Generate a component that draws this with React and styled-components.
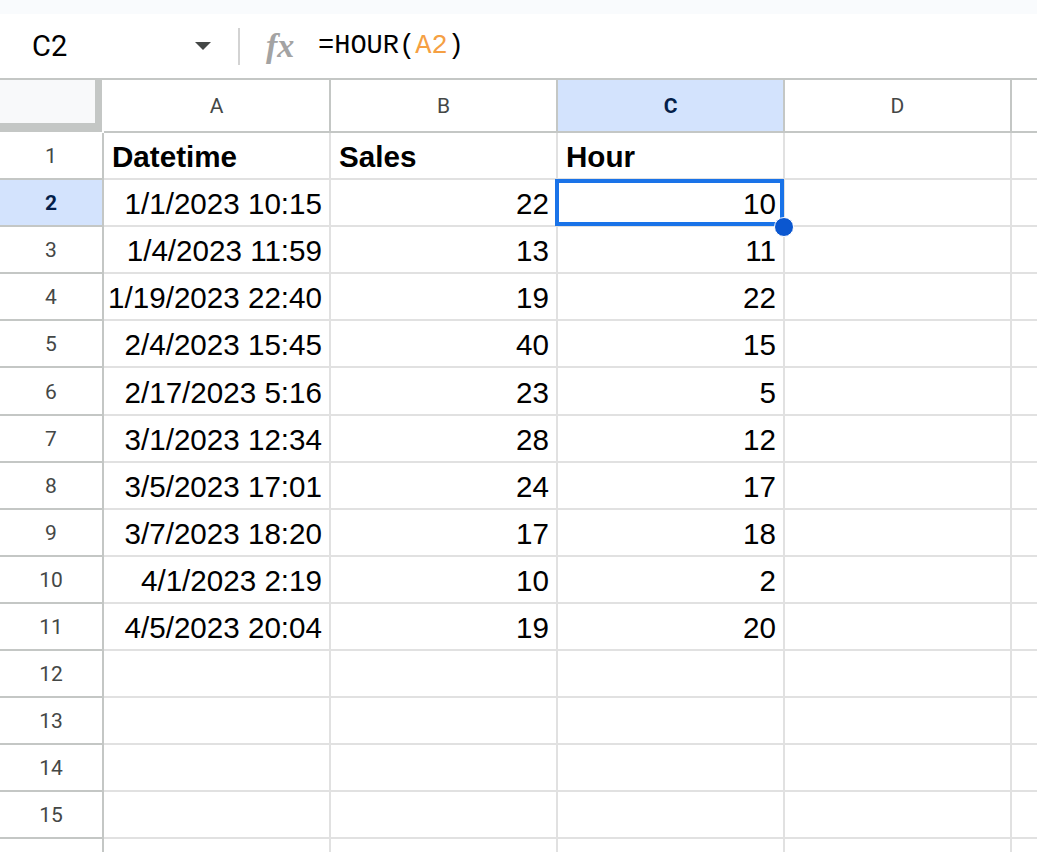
import React from "react";
import styled, { createGlobalStyle, css } from "styled-components";

const GlobalStyle = createGlobalStyle`
  html, body {
    margin: 0;
    padding: 0;
    background: #ffffff;
    overflow: hidden;
  }
  body {
    font-family: "Liberation Sans", Arial, sans-serif;
  }
`;

const Page = styled.div`
  width: 1037px;
  height: 852px;
  overflow: hidden;
  display: flex;
  flex-direction: column;
  background: #ffffff;
`;

const TopStrip = styled.div`
  height: 14px;
  flex-shrink: 0;
  background: #f9fbfd;
`;

const FormulaBar = styled.div`
  height: 64px;
  flex-shrink: 0;
  display: flex;
  align-items: center;
  background: #ffffff;
`;

const NameBox = styled.div`
  width: 225px;
  box-sizing: border-box;
  padding: 0 14px 0 32px;
  display: flex;
  align-items: center;
  justify-content: space-between;
`;

const NameText = styled.span`
  font-family: Roboto, "Liberation Sans", sans-serif;
  font-size: 29px;
  color: #000000;
`;

const DropArrow = styled.span`
  width: 0;
  height: 0;
  border-left: 8px solid transparent;
  border-right: 8px solid transparent;
  border-top: 8px solid #444746;
`;

const Divider = styled.div`
  width: 2px;
  height: 37px;
  margin-left: 13px;
  background: #d3d3d3;
`;

const FxIcon = styled.span`
  margin-left: 26px;
  width: 34px;
  font-family: "Liberation Serif", "DejaVu Serif", serif;
  font-style: italic;
  font-weight: bold;
  font-size: 34px;
  color: #a3a3a3;
  line-height: 1;
  letter-spacing: 0px;
`;

const FormulaText = styled.div`
  margin-left: 18px;
  font-family: "Liberation Mono", "DejaVu Sans Mono", monospace;
  font-size: 27px;
  color: #000000;
  white-space: pre;
`;

const Ref = styled.span`
  color: #f5a043;
`;

const Sheet = styled.div`
  display: flex;
  flex-direction: column;
  flex-shrink: 0;
`;

const HeaderRow = styled.div`
  display: flex;
  border-top: 2px solid #c4c7c5;
  height: 53px;
  flex-shrink: 0;
`;

const Corner = styled.div`
  width: 102px;
  height: 52px;
  margin-right: 2px;
  box-sizing: border-box;
  flex-shrink: 0;
  background: #f8f9fa;
  border-right: 7px solid #c4c7c5;
  border-bottom: 9px solid #c4c7c5;
`;

const selectedHeader = css`
  background: #d3e3fd;
  color: #041e49;
  font-weight: bold;
`;

const ColHeader = styled.div`
  width: 227px;
  flex-shrink: 0;
  box-sizing: border-box;
  border-right: 2px solid #c4c7c5;
  border-bottom: 2px solid #c4c7c5;
  display: flex;
  align-items: center;
  justify-content: center;
  font-family: Roboto, "Liberation Sans", sans-serif;
  font-size: 21px;
  color: #444746;
  background: #ffffff;
  ${(p) => p.$selected && selectedHeader}
`;

const Row = styled.div`
  display: flex;
  height: 47.1px;
  flex-shrink: 0;
`;

const RowHeader = styled.div`
  width: 104px;
  flex-shrink: 0;
  box-sizing: border-box;
  border-right: 2px solid #c4c7c5;
  border-bottom: 2px solid #c4c7c5;
  display: flex;
  align-items: center;
  justify-content: center;
  padding-top: 1px;
  font-family: Roboto, "Liberation Sans", sans-serif;
  font-size: 21px;
  color: #444746;
  background: #ffffff;
  ${(p) => p.$selected && selectedHeader}
`;

const Cell = styled.div`
  position: relative;
  width: 227px;
  flex-shrink: 0;
  box-sizing: border-box;
  border-right: 2px solid #e1e1e1;
  border-bottom: 2px solid #e1e1e1;
  display: flex;
  align-items: flex-end;
  justify-content: ${(p) => (p.$align === "right" ? "flex-end" : "flex-start")};
  padding: 0 7px 4px 8px;
  font-family: "Liberation Sans", Arial, sans-serif;
  font-size: 29.6px;
  font-weight: ${(p) => (p.$bold ? "bold" : "normal")};
  color: #000000;
  white-space: nowrap;
`;

const CellText = styled.span`
  flex-shrink: 0;
`;

const SelectionBox = styled.div`
  position: absolute;
  left: -3px;
  top: -1px;
  width: 229px;
  height: 47px;
  box-sizing: border-box;
  border: 4px solid #1a73e8;
  pointer-events: none;
`;

const FillHandle = styled.div`
  position: absolute;
  left: 216px;
  top: 37px;
  width: 20px;
  height: 20px;
  box-sizing: border-box;
  border-radius: 50%;
  background: #0b57d0;
  border: 1px solid #ffffff;
  z-index: 2;
`;

const columns = [
  { key: "A", label: "A" },
  { key: "B", label: "B" },
  { key: "C", label: "C" },
  { key: "D", label: "D" },
  { key: "E", label: "" },
];

const data = [
  ["1/1/2023 10:15", "22", "10"],
  ["1/4/2023 11:59", "13", "11"],
  ["1/19/2023 22:40", "19", "22"],
  ["2/4/2023 15:45", "40", "15"],
  ["2/17/2023 5:16", "23", "5"],
  ["3/1/2023 12:34", "28", "12"],
  ["3/5/2023 17:01", "24", "17"],
  ["3/7/2023 18:20", "17", "18"],
  ["4/1/2023 2:19", "10", "2"],
  ["4/5/2023 20:04", "19", "20"],
];

const rows = [];
rows.push({
  n: 1,
  label: "1",
  cells: [{ t: "Datetime", b: true }, { t: "Sales", b: true }, { t: "Hour", b: true }, {}, {}],
});
data.forEach((r, i) => {
  rows.push({
    n: i + 2,
    label: String(i + 2),
    cells: [
      { t: r[0], a: "right" },
      { t: r[1], a: "right" },
      { t: r[2], a: "right" },
      {},
      {},
    ],
  });
});
for (let n = 12; n <= 16; n++) {
  rows.push({ n, label: n <= 15 ? String(n) : "", cells: [{}, {}, {}, {}, {}] });
}

export default function App() {
  return (
    <>
      <GlobalStyle />
      <Page>
        <TopStrip />
        <FormulaBar>
          <NameBox>
            <NameText>C2</NameText>
            <DropArrow />
          </NameBox>
          <Divider />
          <FxIcon>fx</FxIcon>
          <FormulaText>
            =HOUR(<Ref>A2</Ref>)
          </FormulaText>
        </FormulaBar>
        <Sheet>
          <HeaderRow>
            <Corner />
            {columns.map((c) => (
              <ColHeader key={c.key} $selected={c.key === "C"}>
                {c.label}
              </ColHeader>
            ))}
          </HeaderRow>
          {rows.map((row) => (
            <Row key={row.n}>
              <RowHeader $selected={row.n === 2}>{row.label}</RowHeader>
              {row.cells.map((cell, ci) => (
                <Cell key={ci} $align={cell.a} $bold={cell.b}>
                  {cell.t && <CellText>{cell.t}</CellText>}
                  {row.n === 2 && ci === 2 && (
                    <>
                      <SelectionBox />
                      <FillHandle />
                    </>
                  )}
                </Cell>
              ))}
            </Row>
          ))}
        </Sheet>
      </Page>
    </>
  );
}
